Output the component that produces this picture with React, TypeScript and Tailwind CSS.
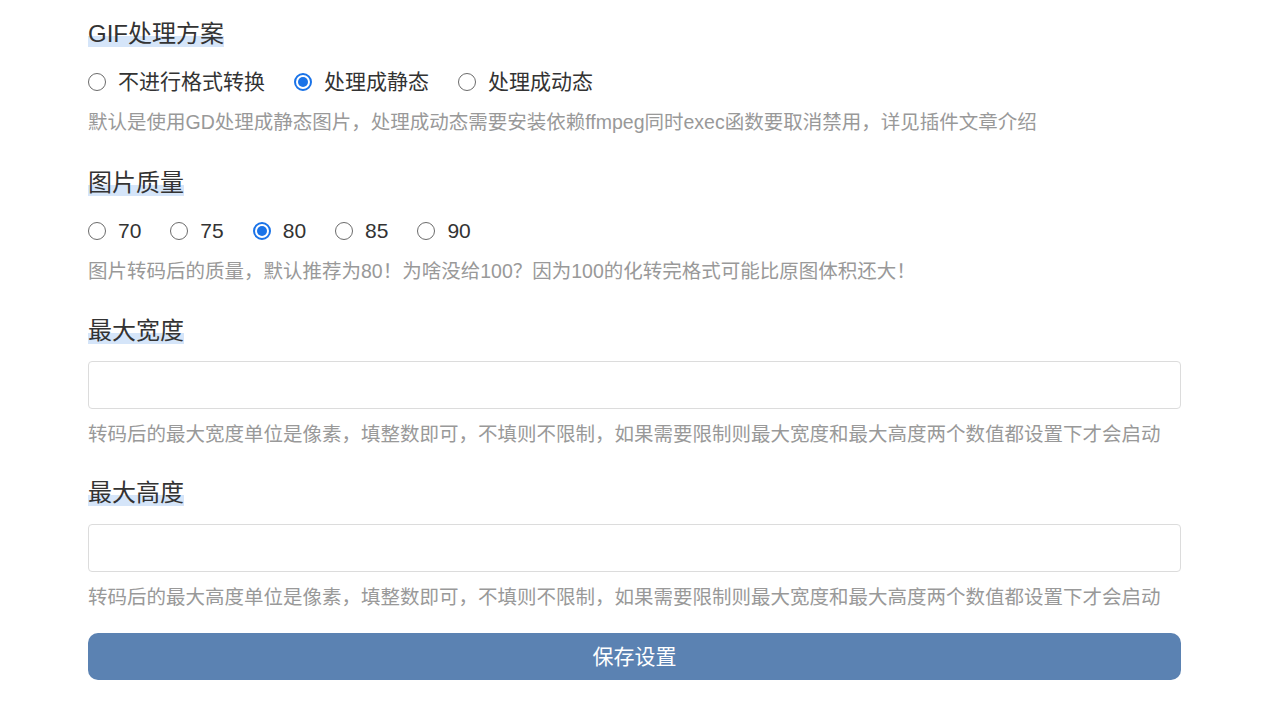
import { useState } from "react";

const gifOptions = ["不进行格式转换", "处理成静态", "处理成动态"];
const qualityOptions = ["70", "75", "80", "85", "90"];

export default function App() {
  const [gif, setGif] = useState("处理成静态");
  const [quality, setQuality] = useState("80");

  return (
    <div className="min-h-screen bg-white font-['Liberation_Sans','Noto_Sans_CJK_SC',sans-serif] text-[#333]">
      <div className="ml-[88px] w-[1093px] pt-[19px]">
        <Heading>GIF处理方案</Heading>
        <RadioRow options={gifOptions} value={gif} onChange={setGif} />
        <Hint>默认是使用GD处理成静态图片，处理成动态需要安装依赖ffmpeg同时exec函数要取消禁用，详见插件文章介绍</Hint>

        <div className="mt-[32px]">
          <Heading>图片质量</Heading>
        </div>
        <RadioRow options={qualityOptions} value={quality} onChange={setQuality} />
        <Hint>图片转码后的质量，默认推荐为80！为啥没给100？因为100的化转完格式可能比原图体积还大！</Hint>

        <div className="mt-[31px]">
          <Heading>最大宽度</Heading>
        </div>
        <input className="mt-[15px] block h-[48px] w-full rounded-[4px] border border-[#dcdcdc] px-3 text-[18px] outline-none" />
        <Hint>转码后的最大宽度单位是像素，填整数即可，不填则不限制，如果需要限制则最大宽度和最大高度两个数值都设置下才会启动</Hint>

        <div className="mt-[30px]">
          <Heading>最大高度</Heading>
        </div>
        <input className="mt-[16px] block h-[48px] w-full rounded-[4px] border border-[#dcdcdc] px-3 text-[18px] outline-none" />
        <Hint>转码后的最大高度单位是像素，填整数即可，不填则不限制，如果需要限制则最大宽度和最大高度两个数值都设置下才会启动</Hint>

        <button
          type="button"
          className="mt-[22px] flex h-[47px] w-full items-center justify-center rounded-[10px] bg-[#5b82b2] text-[21px] text-white"
        >
          保存设置
        </button>
      </div>
    </div>
  );
}

function Heading({ children }: { children: string }) {
  return (
    <span className="inline-block bg-[linear-gradient(transparent_57%,#d5e5f9_57%,#d5e5f9_92%,transparent_92%)] text-[24px] leading-[30px] text-[#333]">
      {children}
    </span>
  );
}

function Hint({ children }: { children: string }) {
  return <p className="mt-[11px] text-[19.5px] leading-[28px] text-[#999]">{children}</p>;
}

function RadioRow({ options, value, onChange }: { options: string[]; value: string; onChange: (v: string) => void }) {
  return (
    <div className="mt-[18px] flex h-[30px] items-center gap-[29px]">
      {options.map((opt) => {
        const active = opt === value;
        return (
          <label key={opt} className="flex cursor-pointer items-center gap-[12px]" onClick={() => onChange(opt)}>
            <span
              className={
                active
                  ? "flex h-[18px] w-[18px] items-center justify-center rounded-full border-2 border-[#1a73e8] bg-white"
                  : "h-[18px] w-[18px] rounded-full border border-[#6b6b6b] bg-white"
              }
            >
              {active && <span className="h-[10px] w-[10px] rounded-full bg-[#1a73e8]" />}
            </span>
            <span className="text-[21px] leading-[30px] text-[#333]">{opt}</span>
          </label>
        );
      })}
    </div>
  );
}
